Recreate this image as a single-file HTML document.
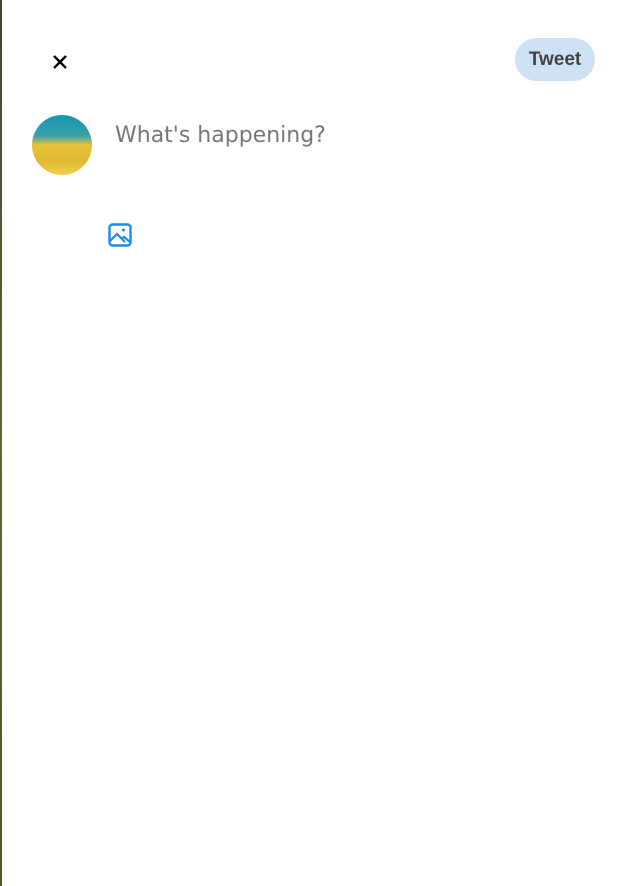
<!DOCTYPE html>
<html><head><style>
body{margin:0;width:623px;height:886px;background:#fff;position:relative;overflow:hidden;font-family:"Liberation Sans",sans-serif}
.edge{position:absolute;left:0;top:0;width:1.5px;height:886px;background:linear-gradient(#3a4a2a,#5a6a30 50%,#4a5a28)}
.x{position:absolute;left:52px;top:54px}
.btn{position:absolute;left:515px;top:38px;width:80px;height:43px;border-radius:22px;background:#cfe1f4;color:#444;font-weight:bold;font-size:19px;text-align:center;line-height:43px}
.av{position:absolute;left:32px;top:115px;width:60px;height:60px;border-radius:50%;background:linear-gradient(#1496b0 0%,#3aa0a8 35%,#e8c43a 50%,#e0b830 75%,#f0d050 100%)}
.ph{position:absolute;left:115px;top:123px;font-family:"DejaVu Sans",sans-serif;font-size:22px;color:#777}
.img{position:absolute;left:108px;top:223px}
</style></head><body>
<div class="edge"></div>
<svg class="x" width="16" height="16" viewBox="0 0 16 16"><path d="M2 2L14 14M14 2L2 14" stroke="#000" stroke-width="2.4"/></svg>
<div class="btn">Tweet</div>
<div class="av"></div>
<div class="ph">What's happening?</div>
<svg class="img" width="24" height="24" viewBox="0 0 24 24"><rect x="1.5" y="1.5" width="21" height="21" rx="3" fill="none" stroke="#1d8ce8" stroke-width="2.4"/><path d="M2 18L9 11L17 19M13 16L16 14L22 19" fill="none" stroke="#1d8ce8" stroke-width="2.2"/><circle cx="15.5" cy="7" r="1.5" fill="#1d8ce8"/></svg>
</body></html>
